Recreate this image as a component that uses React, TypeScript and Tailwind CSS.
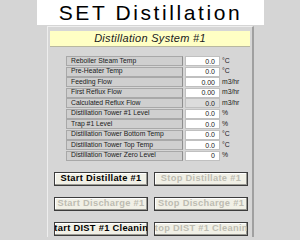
import React from "react";

const rows = [
  { label: "Reboiler Steam Temp", value: "0.0", unit: "°C" },
  { label: "Pre-Heater Temp", value: "0.0", unit: "°C" },
  { label: "Feeding Flow", value: "0.00", unit: "m3/hr" },
  { label: "First Reflux Flow", value: "0.00", unit: "m3/hr" },
  { label: "Calculated Reflux Flow", value: "0.0", unit: "m3/hr", readOnly: true },
  { label: "Distillation Tower #1 Level", value: "0.0", unit: "%" },
  { label: "Trap #1 Level", value: "0.0", unit: "%" },
  { label: "Distillation Tower Bottom Temp", value: "0.0", unit: "°C" },
  { label: "Distillation Tower Top Temp", value: "0.0", unit: "°C" },
  { label: "Distillation Tower Zero Level", value: "0", unit: "%" },
];

const buttons = [
  { name: "Start Distillate #1", on: true },
  { name: "Stop Distillate #1", on: false },
  { name: "Start Discharge #1", on: false },
  { name: "Stop Discharge #1", on: false },
  { name: "Start DIST #1 Cleaning", on: true },
  { name: "Stop DIST #1 Cleaning", on: false },
];

function Btn({ name, on }: { name: string; on: boolean }) {
  return (
    <div className="w-[94px] h-[14px] bg-[#f1f0e6] border border-[#3c3c3c] shadow-[inset_-1px_-1px_0_#9a9a94,inset_1px_1px_0_#ffffff] flex items-center justify-center overflow-hidden">
      <span
        className={
          "whitespace-nowrap text-[9.3px] font-bold leading-none tracking-[0.3px] " +
          (on ? "text-black" : "text-[#bdbcb2]")
        }
      >
        {name}
      </span>
    </div>
  );
}

export default function App() {
  return (
    <div className="w-[300px] h-[240px] bg-[#d5d5d5] overflow-hidden font-['Liberation_Sans',Arial,sans-serif]">
      <div className="ml-[37px] w-[227px] h-[25px] bg-white flex items-center justify-center">
        <span className="text-[21px] leading-none tracking-[2.6px] text-black">SET Distillation</span>
      </div>

      <div className="ml-[47px] mt-[1px] w-[207px] h-[211px] bg-[#d6d6d6] border-l border-t border-[#eeeeee] border-r-2 border-r-[#a0a0a0] pt-[4px] pl-[2px]">
        <div className="w-[200px] h-[16px] bg-[#ffffc4] border-b border-[#b8b8a0] flex items-center justify-center">
          <span className="italic text-[11px] leading-none tracking-[0.3px] text-[#202020]">Distillation System #1</span>
        </div>

        <div className="mt-[9px] ml-[16px] flex flex-col gap-[0.5px]">
          {rows.map((r) => (
            <div key={r.label} className="flex items-center h-[10px]">
              <div className="w-[117px] h-[10px] bg-[#cfcfcf] border border-[#a8a8a8] border-r-[#8e8e8e] pl-[4px] flex items-center">
                <span className="text-[6.8px] leading-none text-[#202020] whitespace-nowrap">{r.label}</span>
              </div>
              <div
                className={
                  "ml-[2px] w-[35px] h-[10px] border border-[#c0c0c0] flex items-center justify-end pr-[4px] " +
                  (r.readOnly ? "bg-[#dcdcdc]" : "bg-white")
                }
              >
                <span className="text-[7px] leading-none text-[#202020]">{r.value}</span>
              </div>
              <span className="ml-[2px] text-[6.8px] leading-none text-[#202020]">{r.unit}</span>
            </div>
          ))}
        </div>

        <div className="mt-[11px] ml-[4px] grid grid-cols-[94px_94px] gap-x-[6px] gap-y-[11px]">
          {buttons.map((b) => (
            <Btn key={b.name} name={b.name} on={b.on} />
          ))}
        </div>
      </div>
    </div>
  );
}
